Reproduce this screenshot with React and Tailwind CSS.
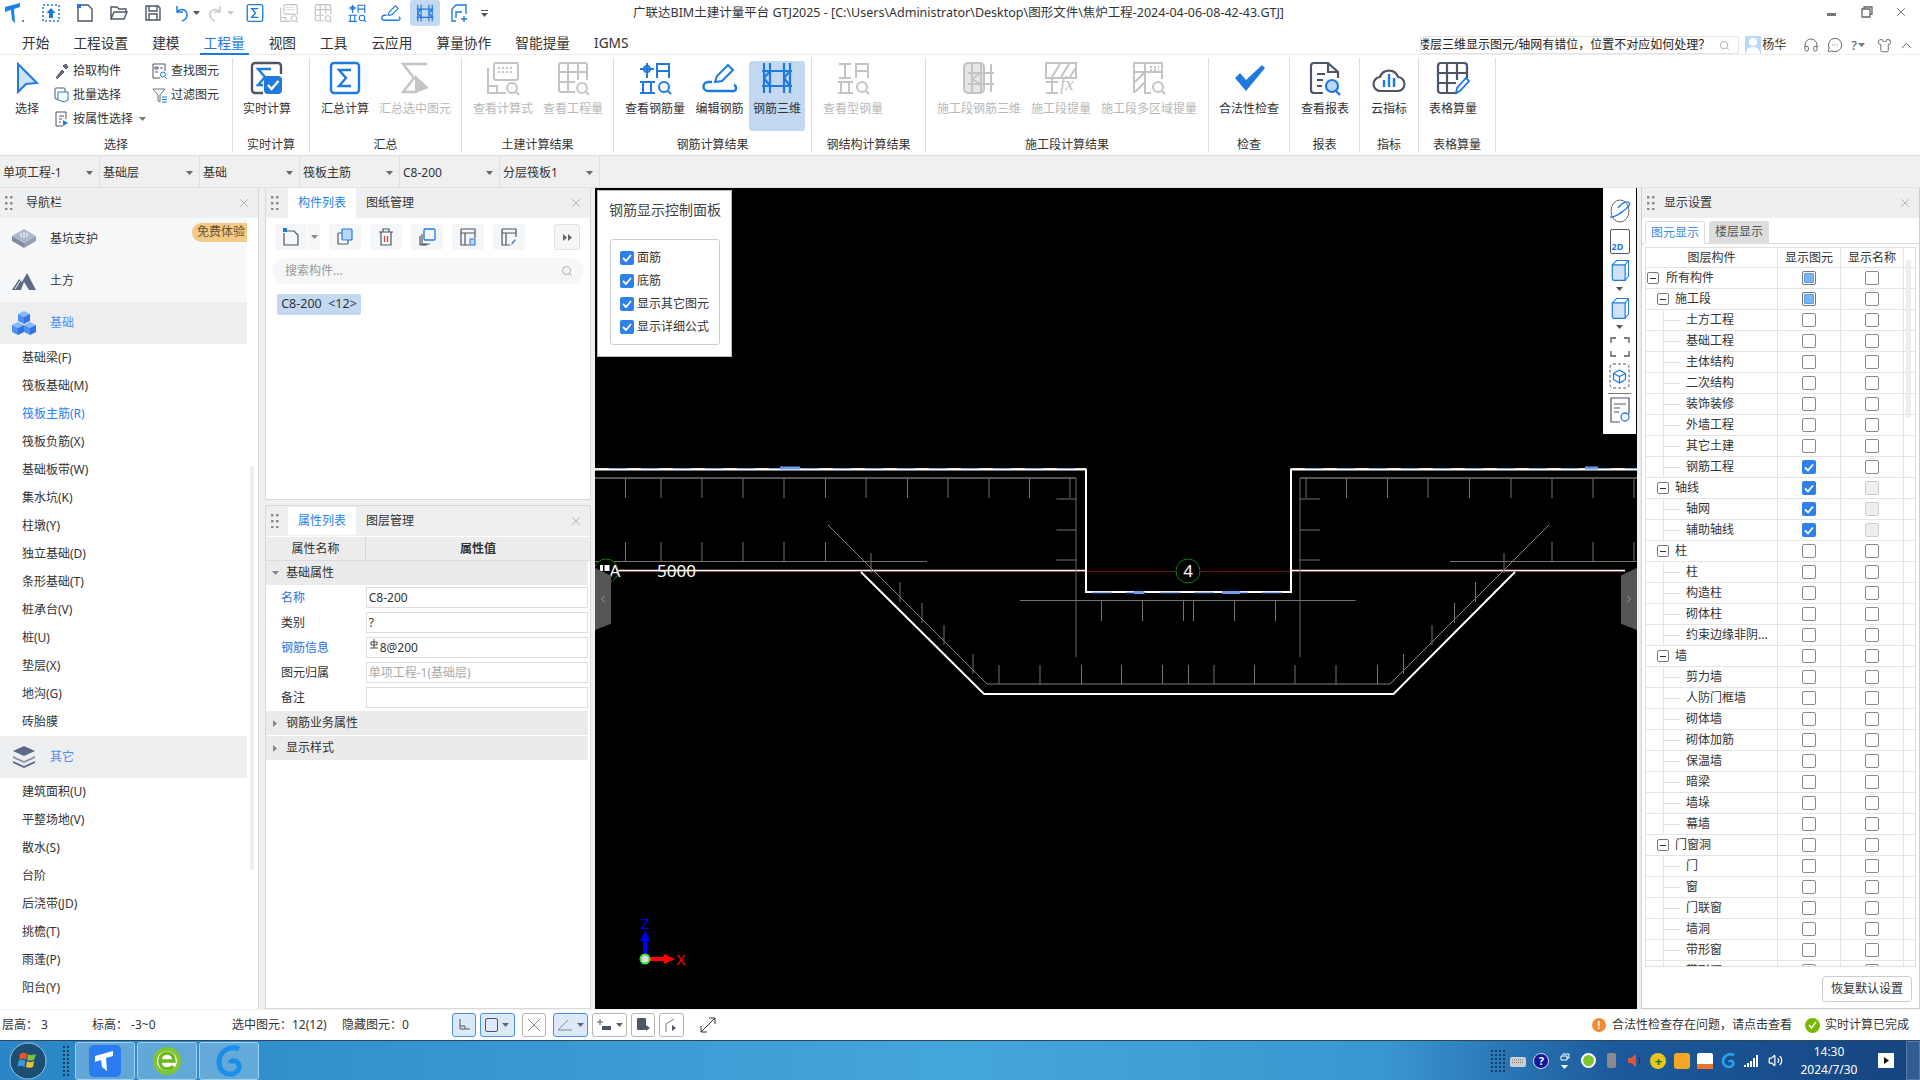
import { X, Search, ChevronUp, Headphones, MessageCircleMore, Shirt, ChevronLeft, ChevronRight, Volume2 } from "lucide-react"

const BLUE = "#1f7ae0"
const DARK = "#4d5666"
const GRAY = "#c4c4c4"

function Ic({ s = 36, children, className }) {
  return (
    <svg width={s} height={s} viewBox="0 0 36 36" fill="none" strokeWidth="2" className={className}>
      {children}
    </svg>
  )
}

// ribbon + quick access icons
const SigmaMark = ({ c }) => <path d="M24 10H12l7 8-7 8h12" stroke={c} strokeWidth="2.4" fill="none" />
const SumIcon = ({ s, c = BLUE }) => (
  <Ic s={s}>
    <rect x="4" y="3" width="28" height="30" rx="3" stroke={c} strokeWidth="2.4" />
    <SigmaMark c={c} />
  </Ic>
)
const RealtimeIcon = () => (
  <Ic>
    <path d="M32 14V6a3 3 0 0 0-3-3H6a3 3 0 0 0-3 3v24a3 3 0 0 0 3 3h8" stroke={DARK} strokeWidth="2.4" />
    <path d="M22 9H9l7 8-7 8h5" stroke={BLUE} strokeWidth="2.4" />
    <rect x="15" y="16" width="18" height="18" rx="4" fill={BLUE} />
    <path d="m19 25 3.500 4 7-8" stroke="#fff" strokeWidth="2.400" />
  </Ic>
)
const SumSelIcon = () => (
  <Ic>
    <path d="M30 4H6l11 14L6 32h14" stroke={GRAY} strokeWidth="2.4" />
    <path d="M18 15v18l14-5z" fill={GRAY} />
  </Ic>
)
const FormulaIcon = ({ s, c = GRAY, m = GRAY }) => (
  <Ic s={s}>
    <rect x="9" y="3" width="24" height="17" rx="2" stroke={c} />
    <path d="M13 8h16M13 12h16" stroke={c} strokeDasharray="2 2" />
    <path d="M3 8v25h18M3 26h9v7" stroke={c} />
    <circle cx="27" cy="28" r="5" stroke={m} />
    <path d="m31 32 3 3" stroke={m} />
  </Ic>
)
const QtyIcon = ({ s, c = GRAY, m = GRAY }) => (
  <Ic s={s}>
    <path d="M20 32H6a2 2 0 0 1-2-2V5a2 2 0 0 1 2-2h24a2 2 0 0 1 2 2v15M4 12h28M4 22h16M13 3v29M23 3v17" stroke={c} />
    <circle cx="27" cy="28" r="5" stroke={m} />
    <path d="m31 32 3 3" stroke={m} />
  </Ic>
)
const RebarQtyIcon = ({ s, c = BLUE }) => (
  <Ic s={s}>
    <circle cx="10" cy="9" r="3" stroke={c} />
    <path d="M10 3v15M3 9h14M20 18V4h12v14M20 11h12M3 22h15M3 33h15M6 22v11M14 22v11" stroke={c} />
    <circle cx="27" cy="27" r="5" stroke={c} />
    <path d="m31 31 3 3" stroke={c} />
  </Ic>
)
const EditRebarIcon = ({ s }) => (
  <Ic s={s}>
    <path d="m13 22 2-6L26 5l5 5-11 11z" stroke={BLUE} />
    <path d="M10 22H6a4 4 0 0 0 0 9h24a3 3 0 0 0 2-6" stroke={BLUE} strokeWidth="2.4" />
  </Ic>
)
const Rebar3DIcon = ({ s }) => (
  <Ic s={s}>
    <path d="M5 3v30M11 3v30M25 3v30M31 3v30M3 11h30M3 26h30M11 11l-6 7 6 8M31 11l-6 7 6 8" stroke={BLUE} strokeWidth="2.2" />
  </Ic>
)
const SteelIcon = () => (
  <Ic>
    <path d="M4 4h12M4 18h12M10 4v14M21 18V4h12v14M21 11h12M3 22h15M3 33h15M6 22v11M14 22v11" stroke={GRAY} />
    <circle cx="27" cy="27" r="5" stroke={GRAY} />
    <path d="m31 31 3 3" stroke={GRAY} />
  </Ic>
)
const ConstRebarIcon = () => (
  <Ic>
    <rect x="3" y="3" width="20" height="30" rx="4" fill="#e6e6e6" stroke={GRAY} />
    <path d="M11 4v28M20 4v28M30 4v28M7 13h26M7 24h26M20 13l-9 6 9 5" stroke={GRAY} />
  </Ic>
)
const ConstQtyIcon = () => (
  <div className="relative w-[36px] h-[36px]">
    <Ic>
      <path d="M3 3h30v15H3zM9 17l8-13M18 17l8-13M27 17l5-8M3 22h12M3 33h12M9 18v15" stroke={GRAY} />
    </Ic>
    <span className="absolute left-[17px] top-[14px] font-['Liberation_Serif',serif] italic text-[19px] leading-[20px] text-[#c4c4c4]">fx</span>
  </div>
)
const ConstMultiIcon = () => (
  <Ic>
    <path d="M3 33V3h28v16M3 12h28" stroke={GRAY} />
    <path d="m4 22 10-10M4 32l10-10M14 3v30h6" stroke={GRAY} />
    <path d="M19 7h9M19 10h9" stroke={GRAY} strokeDasharray="2 2" />
    <circle cx="27" cy="27" r="5" stroke={GRAY} />
    <path d="m31 31 3 3" stroke={GRAY} />
  </Ic>
)
const CheckBig = () => (
  <Ic>
    <path d="m4 18 5-5 6 7L31 5l3 3-19 23z" fill={BLUE} />
  </Ic>
)
const ReportIcon = () => (
  <Ic>
    <path d="M16 33H7a3 3 0 0 1-3-3V6a3 3 0 0 1 3-3h14l10 9v6" stroke={DARK} strokeWidth="2.2" />
    <path d="M21 3v9h10M10 14h8M10 20h6M10 26h5" stroke={DARK} strokeWidth="2.2" />
    <circle cx="25" cy="26" r="6" fill="#bcd7f7" stroke={BLUE} strokeWidth="2.2" />
    <path d="m29 31 4 4" stroke={BLUE} strokeWidth="2.4" />
  </Ic>
)
const CloudIcon = () => (
  <Ic>
    <path d="M10 31a7 7 0 0 1-1-14 9.500 9.500 0 0 1 18 0 7 7 0 0 1-1 14z" stroke={DARK} strokeWidth="2.2" />
    <path d="M13 20v7M18 14v13M23 18v9" stroke={BLUE} strokeWidth="2.4" />
  </Ic>
)
const TableIcon = () => (
  <Ic>
    <path d="M22 33H6a3 3 0 0 1-3-3V6a3 3 0 0 1 3-3h23a3 3 0 0 1 3 3v12M3 13h29M3 23h18M12 3v30M22 3v17" stroke={DARK} strokeWidth="2.2" />
    <path d="m21 33 1-5 9-10 3 3-9 10z" stroke={BLUE} strokeWidth="1.800" />
  </Ic>
)

const Logo = () => (
  <svg width="22" height="22" viewBox="0 0 22 22" fill="none">
    <path d="M1 5 16 1v4l-6 2 1 14-3-3-1-10-6 2z" fill="#1b82e8" />
    <circle cx="19" cy="19" r="1" fill="#555" />
  </svg>
)

function Caret({ c = "#666" }) {
  return (
    <svg width="7" height="4" viewBox="0 0 7 4" className="shrink-0">
      <path d="M0 0h7L3.500 4z" fill={c} />
    </svg>
  )
}

function QuickIcon({ children, active }) {
  return (
    <div className="w-[34px] h-[30px] flex items-center justify-center relative shrink-0">
      <div className={`w-[30px] h-[26px] flex items-center justify-center rounded-[3px] ${active ? "bg-[#c2d9f1]" : ""}`}>{children}</div>
    </div>
  )
}

function TitleBar() {
  return (
    <div className="h-[33px] shrink-0 flex items-center bg-white pb-[7px]">
      <div className="w-[633px] shrink-0 flex items-center">
        <div className="w-[30px] flex justify-center"><Logo /></div>
        <div className="w-[4px]" />
        <QuickIcon>
          <svg width="20" height="20" viewBox="0 0 20 20" fill="none">
            <rect x="2" y="2" width="16" height="16" stroke={BLUE} strokeWidth="1.500" strokeDasharray="2 2" />
            <path d="M10 5 5.500 10H8v5h4v-5h2.500z" fill={BLUE} />
          </svg>
        </QuickIcon>
        <QuickIcon>
          <svg width="20" height="20" viewBox="0 0 20 20" fill="none">
            <path d="M5 2h8l4 4v12H3V5" stroke={DARK} strokeWidth="1.400" />
            <rect x="2" y="1" width="4" height="4" fill={BLUE} />
          </svg>
        </QuickIcon>
        <QuickIcon>
          <svg width="20" height="20" viewBox="0 0 20 20" fill="none">
            <path d="M2 16V4h6l2 2h7v3M2 16l3-7h13l-3 7z" stroke={DARK} strokeWidth="1.400" />
          </svg>
        </QuickIcon>
        <QuickIcon>
          <svg width="20" height="20" viewBox="0 0 20 20" fill="none">
            <path d="M3 3h12l2 2v12H3zM6 3v5h8V3M6 17v-6h8v6" stroke={DARK} strokeWidth="1.400" />
          </svg>
        </QuickIcon>
        <QuickIcon>
          <div className="flex items-center gap-[4px]">
            <svg width="15" height="17" viewBox="0 0 15 17" fill="none"><path d="M3 1v6h6M3 7c3-4 10-3 10 3 0 3-2 5-5 6" stroke={BLUE} strokeWidth="1.500" /></svg>
            <Caret c="#555" />
          </div>
        </QuickIcon>
        <QuickIcon>
          <div className="flex items-center gap-[4px]">
            <svg width="15" height="17" viewBox="0 0 15 17" fill="none"><path d="M12 1v6H6M12 7C9 3 2 4 2 10c0 3 2 5 5 6" stroke="#c8c8c8" strokeWidth="1.500" /></svg>
            <Caret c="#c8c8c8" />
          </div>
        </QuickIcon>
        <QuickIcon><SumIcon s={20} /></QuickIcon>
        <QuickIcon><FormulaIcon s={20} /></QuickIcon>
        <QuickIcon><QtyIcon s={20} /></QuickIcon>
        <QuickIcon><RebarQtyIcon s={20} /></QuickIcon>
        <QuickIcon><EditRebarIcon s={20} /></QuickIcon>
        <QuickIcon active><Rebar3DIcon s={20} /></QuickIcon>
        <QuickIcon>
          <svg width="20" height="20" viewBox="0 0 20 20" fill="none">
            <path d="M7 18H3V6l4-4h10v9M13 9H7v6" stroke={BLUE} strokeWidth="1.400" />
            <path d="M15 13v6M12 16h6" stroke={BLUE} strokeWidth="1.400" />
          </svg>
        </QuickIcon>
        <div className="w-[16px] flex flex-col items-center gap-[2px]">
          <div className="w-[7px] h-px bg-[#555]" />
          <Caret c="#555" />
        </div>
      </div>
      <div className="text-[12.5px] leading-[18px] text-[#333] whitespace-nowrap">
        广联达BIM土建计量平台 GTJ2025 - [C:\Users\Administrator\Desktop\图形文件\焦炉工程-2024-04-06-08-42-43.GTJ]
      </div>
      <div className="ml-auto flex items-center pr-[12px] text-[#666]">
        <div className="w-[9px] h-[3px] bg-[#777] mt-[2px]" />
        <svg width="12" height="12" viewBox="0 0 12 12" fill="none" className="ml-[25px] mb-[3px]">
          <path d="M3 3V1h8v7H9M1 3h8v8H1z" stroke="#666" strokeWidth="1.300" />
        </svg>
        <X size={14} strokeWidth={1.500} className="ml-[21px] mb-[3px]" />
      </div>
    </div>
  )
}

const tabs = ["开始", "工程设置", "建模", "工程量", "视图", "工具", "云应用", "算量协作", "智能提量", "IGMS"]

function MenuBar() {
  return (
    <div className="h-[22px] shrink-0 flex items-stretch bg-white border-b border-[#eee] relative pl-[10px]">
      {tabs.map((t) => (
        <div
          key={t}
          className={`mx-[8px] px-[4px] text-[13.7px] leading-[20px] h-[22px] ${t === "工程量" ? "text-[#1f7ae0] border-b-2 border-[#1f7ae0]" : "text-[#333]"}`}
        >
          {t}
        </div>
      ))}
      <div className="ml-auto flex items-center mt-[3px]">
        <div className="w-[319px] h-[18px] border border-[#e4e4e4] rounded-[2px] flex items-center overflow-hidden">
          <div className="flex-1 min-w-0 flex justify-end overflow-hidden">
            <span className="shrink-0 whitespace-nowrap text-[12px] leading-[16px] text-[#222]">楼层三维显示图元/轴网有错位，位置不对应如何处理？</span>
          </div>
          <div className="w-[28px] shrink-0 flex justify-center">
            <Search size={11} className="text-[#aaa]" />
          </div>
        </div>
        <div className="w-[16px] h-[18px] ml-[6px] bg-[#bcd9f7] flex justify-center items-end overflow-hidden">
          <svg width="16" height="18" viewBox="0 0 16 18"><circle cx="8" cy="6" r="4" fill="#fff" /><path d="M1 18c0-5 3-7 7-7s7 2 7 7z" fill="#fff" /></svg>
        </div>
        <span className="text-[12px] text-[#333] leading-[16px] ml-[1px] w-[26px]">杨华</span>
        <div className="w-[15px]" />
        <Headphones size={16} strokeWidth={1.300} className="text-[#555]" />
        <MessageCircleMore size={16} strokeWidth={1.300} className="text-[#555] ml-[8px]" />
        <span className="text-[13px] text-[#555] leading-[16px] ml-[8px]">?</span>
        <div className="ml-[1px]"><Caret c="#777" /></div>
        <Shirt size={15} strokeWidth={1.300} className="text-[#555] ml-[12px]" />
        <ChevronUp size={17} strokeWidth={1.300} className="text-[#555] ml-[6px] mr-[5px]" />
      </div>
    </div>
  )
}

function BigBtn({ icon, label, w, off, active }) {
  return (
    <div style={{ width: w }} className={`h-[70px] shrink-0 flex flex-col items-center rounded-[3px] ${active ? "bg-[#c2d9f1]" : ""}`}>
      <div className="h-[36px] -mt-px flex items-center justify-center">{icon}</div>
      <div className={`mt-[5px] h-[16px] text-[12px] leading-[16px] whitespace-nowrap ${off ? "text-[#b8b8b8]" : "text-[#333]"}`}>{label}</div>
    </div>
  )
}

function Group({ w, pl = 0, label, children }) {
  return (
    <div style={{ width: w }} className="shrink-0 h-[94px] mt-[3px] pt-[3px] flex flex-col border-r border-[#dedede]">
      <div style={{ paddingLeft: pl }} className="h-[70px] flex">{children}</div>
      <div className="mt-[6px] h-[16px] text-[12px] leading-[16px] text-center text-[#333]">{label}</div>
    </div>
  )
}

function SmallCmd({ icon, label, caret }) {
  return (
    <div className="h-[24px] flex items-center gap-[4px] text-[12px] text-[#333] whitespace-nowrap">
      <div className="w-[15px] flex justify-center">{icon}</div>
      <span className="leading-[16px]">{label}</span>
      {caret && <div className="ml-[2px]"><Caret c="#777" /></div>}
    </div>
  )
}

function Ribbon() {
  return (
    <div className="h-[101px] shrink-0 flex items-start bg-white border-b border-[#dcdcdc]">
      <Group w={233} label="选择">
        <div className="w-[54px] flex flex-col items-center shrink-0">
          <div className="h-[36px] -mt-px flex items-center">
            <svg width="24" height="32" viewBox="0 0 24 32" fill="none"><path d="M3 2 22 21l-11 1-8 8z" fill="#cfe2f9" stroke={BLUE} strokeWidth="2" /></svg>
          </div>
          <div className="mt-[5px] text-[12px] leading-[16px] text-[#333]">选择</div>
        </div>
        <div className="w-[98px] shrink-0 -mt-[2px]">
          <SmallCmd label="拾取构件" icon={
            <svg width="14" height="16" viewBox="0 0 14 16" fill="none"><path d="M1 15 7 7l2 2-6 6zM8 3l3 3 2-2-2-3z" fill="#6b7280" stroke="#4d5666" /></svg>
          } />
          <SmallCmd label="批量选择" icon={
            <svg width="15" height="16" viewBox="0 0 15 16" fill="none"><rect x="1" y="1" width="10" height="11" rx="1" stroke="#4d5666" /><path d="M4 5h10v8l-4 2-6-2z" fill="#fff" stroke={BLUE} /></svg>
          } />
          <SmallCmd caret label="按属性选择" icon={
            <svg width="15" height="16" viewBox="0 0 15 16" fill="none"><path d="M9 15H2V1h10v7M5 5h5M5 8h3M5 11h2" stroke="#4d5666" /><path d="m9 9 5 3-5 3z" fill={BLUE} /></svg>
          } />
        </div>
        <div className="shrink-0 -mt-[2px]">
          <SmallCmd label="查找图元" icon={
            <svg width="15" height="16" viewBox="0 0 15 16" fill="none"><path d="M8 15H1V1h12v7M3 4h3v2H3zM8 5h3M3 9h3" stroke="#4d5666" /><circle cx="11" cy="11.500" r="2.500" stroke={BLUE} /><path d="m13 14 2 2" stroke={BLUE} /></svg>
          } />
          <SmallCmd label="过滤图元" icon={
            <svg width="15" height="16" viewBox="0 0 15 16" fill="none"><path d="M1 2h12L8 8v7L6 14V8z" stroke="#6b7280" /><path d="M10 10h5M10 12.500h5M10 15h5" stroke={BLUE} /></svg>
          } />
        </div>
      </Group>
      <Group w={77} pl={2} label="实时计算">
        <BigBtn w={64} icon={<RealtimeIcon />} label="实时计算" />
      </Group>
      <Group w={152} label="汇总">
        <BigBtn w={70} icon={<SumIcon />} label="汇总计算" />
        <BigBtn w={70} off icon={<SumSelIcon />} label="汇总选中图元" />
      </Group>
      <Group w={152} pl={6} label="土建计算结果">
        <BigBtn w={70} off icon={<FormulaIcon />} label="查看计算式" />
        <BigBtn w={70} off icon={<QtyIcon />} label="查看工程量" />
      </Group>
      <Group w={198} pl={6} label="钢筋计算结果">
        <BigBtn w={70} icon={<RebarQtyIcon />} label="查看钢筋量" />
        <BigBtn w={59} icon={<EditRebarIcon />} label="编辑钢筋" />
        <BigBtn w={56} active icon={<Rebar3DIcon />} label="钢筋三维" />
      </Group>
      <Group w={114} pl={6} label="钢结构计算结果">
        <BigBtn w={70} off icon={<SteelIcon />} label="查看型钢量" />
      </Group>
      <Group w={283} pl={8} label="施工段计算结果">
        <BigBtn w={90} off icon={<ConstRebarIcon />} label="施工段钢筋三维" />
        <BigBtn w={74} off icon={<ConstQtyIcon />} label="施工段提量" />
        <BigBtn w={102} off icon={<ConstMultiIcon />} label="施工段多区域提量" />
      </Group>
      <Group w={81} pl={5} label="检查">
        <BigBtn w={70} icon={<CheckBig />} label="合法性检查" />
      </Group>
      <Group w={70} pl={5} label="报表">
        <BigBtn w={60} icon={<ReportIcon />} label="查看报表" />
      </Group>
      <Group w={59} pl={4} label="指标">
        <BigBtn w={50} icon={<CloudIcon />} label="云指标" />
      </Group>
      <Group w={77} pl={4} label="表格算量">
        <BigBtn w={60} icon={<TableIcon />} label="表格算量" />
      </Group>
    </div>
  )
}

const combos = ["单项工程-1", "基础层", "基础", "筏板主筋", "C8-200", "分层筏板1"]

function ComboBar() {
  return (
    <div className="h-[32px] shrink-0 flex bg-[#f0f0f0] border-b border-[#e2e2e2]">
      {combos.map((c) => (
        <div key={c} className="w-[100px] flex items-center justify-between pl-[3px] pr-[6px] pt-[2px] border-r border-[#e0e0e0] text-[12px] text-[#333]">
          <span className="leading-[16px]">{c}</span>
          <Caret />
        </div>
      ))}
    </div>
  )
}

function Grip() {
  return (
    <svg width="8" height="14" viewBox="0 0 8 14" className="shrink-0">
      {[1, 7, 13].map((y) => (
        <g key={y} fill="#8a8a8a">
          <rect x="0" y={y - 1} width="2.500" height="2.500" />
          <rect x="5" y={y - 1} width="2.500" height="2.500" />
        </g>
      ))}
    </svg>
  )
}

function PanelHead({ children }) {
  return (
    <div className="h-[30px] shrink-0 flex items-center bg-[#eeeff1] pl-[5px] pr-[7px]">
      <Grip />
      {children}
      <X size={14} strokeWidth={1.200} className="ml-auto text-[#999]" />
    </div>
  )
}

const IsoBox = ({ c1, c2, c3, x = 0, y = 0, s = 1 }) => (
  <g transform={`translate(${x} ${y}) scale(${s})`}>
    <path d="M0 3 6 0l6 3-6 3z" fill={c1} />
    <path d="M0 3v7l6 3V6z" fill={c2} />
    <path d="M12 3v7l-6 3V6z" fill={c3} />
  </g>
)

function NavGroup({ icon, label, active, badge }) {
  return (
    <div className={`h-[42px] w-[247px] flex items-center pl-[11px] relative ${active ? "bg-[#edeef0]" : "bg-[#f7f8fa]"}`}>
      <div className="w-[26px] h-[26px] flex items-center justify-center">{icon}</div>
      <span className={`ml-[13px] text-[12px] leading-[16px] ${active ? "text-[#4c8fe8]" : "text-[#333]"}`}>{label}</span>
      {badge && (
        <div className="absolute right-0 top-[5px] w-[55px] h-[19px] rounded-l-[10px] bg-[#f3c986] text-[12px] leading-[18px] text-[#6b5330] text-right pr-[2px]">免费体验</div>
      )}
    </div>
  )
}

function NavItem({ label, on }) {
  return <div className={`h-[28px] pl-[22px] flex items-center text-[12px] ${on ? "text-[#1f83ee]" : "text-[#333]"}`}>{label}</div>
}

const foundation = ["基础梁(F)", "筏板基础(M)", "筏板主筋(R)", "筏板负筋(X)", "基础板带(W)", "集水坑(K)", "柱墩(Y)", "独立基础(D)", "条形基础(T)", "桩承台(V)", "桩(U)", "垫层(X)", "地沟(G)", "砖胎膜"]
const others = ["建筑面积(U)", "平整场地(V)", "散水(S)", "台阶", "后浇带(JD)", "挑檐(T)", "雨蓬(P)", "阳台(Y)"]

function Nav() {
  return (
    <div className="w-[259px] shrink-0 flex flex-col bg-white border-r border-[#d8d8d8] h-[821px]">
      <PanelHead>
        <span className="ml-[13px] text-[12px] leading-[16px] text-[#333]">导航栏</span>
      </PanelHead>
      <div className="flex-1 min-h-0 overflow-hidden relative">
        <NavGroup
          badge
          label="基坑支护"
          icon={
            <svg width="26" height="24" viewBox="0 0 26 24"><path d="M1 9 13 2l12 7-12 7z" fill="#aeb8cc" /><path d="M1 9v5l12 7V16z" fill="#7f8aa3" /><path d="M25 9v5l-12 7V16z" fill="#939eb6" /><path d="M10 10V6M13 11V5M16 10V6" stroke="#fff" /></svg>
          }
        />
        <NavGroup
          label="土方"
          icon={
            <svg width="26" height="22" viewBox="0 0 26 22"><path d="M1 20 8 9l3 3 5-9 9 17h-7l-5-8-3 8z" fill="#5c6a86" /><path d="M4 19 9 11" stroke="#f7f8fa" /></svg>
          }
        />
        <NavGroup
          active
          label="基础"
          icon={
            <svg width="24" height="24" viewBox="0 0 24 24"><IsoBox c1="#85b8ff" c2="#4f8ff0" c3="#3273df" x={6} y={0} /><IsoBox c1="#85b8ff" c2="#4f8ff0" c3="#3273df" x={0} y={11} /><IsoBox c1="#85b8ff" c2="#4f8ff0" c3="#3273df" x={12} y={11} /></svg>
          }
        />
        {foundation.map((n) => <NavItem key={n} label={n} on={n === "筏板主筋(R)"} />)}
        <NavGroup
          active
          label="其它"
          icon={
            <svg width="24" height="22" viewBox="0 0 24 22"><path d="m1 5 11-5 11 5-11 5z" fill="#5c6a86" /><path d="m1 10 11 5 11-5v2l-11 5-11-5z" fill="#8a94a9" /><path d="m1 15 11 5 11-5v2l-11 5-11-5z" fill="#5c6a86" /></svg>
          }
        />
        {others.map((n) => <NavItem key={n} label={n} />)}
        <div className="absolute left-[250px] top-[248px] w-[4px] h-[404px] rounded-full bg-[#eee]" />
      </div>
    </div>
  )
}

function ToolBtn({ children }) {
  return <div className="w-[32px] h-[26px] rounded-[3px] bg-[#f5f6f7] flex items-center justify-center">{children}</div>
}

function ListPanel() {
  const stroke = "#4d5666"
  return (
    <div className="h-[312px] shrink-0 flex flex-col bg-white border border-[#d8d8d8] border-t-0">
      <PanelHead>
        <div className="ml-[9px] w-[68px] h-[30px] bg-white text-[12px] leading-[30px] text-center text-[#1f83ee]">构件列表</div>
        <span className="ml-[10px] text-[12px] leading-[16px] text-[#333]">图纸管理</span>
      </PanelHead>
      <div className="flex items-center h-[26px] mt-[6px] pl-[9px] pr-[10px]">
        <ToolBtn>
          <svg width="16" height="18" viewBox="0 0 16 18" fill="none"><path d="M4 3h7l4 4v10H1V5" stroke={stroke} strokeWidth="1.200" /><rect x="0" y="0" width="4" height="4" fill={BLUE} /></svg>
        </ToolBtn>
        <div className="w-[12px] ml-px h-[26px] bg-[#f5f6f7] flex items-center justify-center"><Caret c="#888" /></div>
        <div className="ml-[9px]"><ToolBtn>
          <svg width="16" height="18" viewBox="0 0 16 18" fill="none"><rect x="1" y="5" width="10" height="11" rx="1" fill="#fff" stroke={stroke} strokeWidth="1.200" /><rect x="5" y="1" width="10" height="11" rx="1" fill="#bcd7f7" stroke={BLUE} strokeWidth="1.200" /></svg>
        </ToolBtn></div>
        <div className="ml-[9px]"><ToolBtn>
          <svg width="16" height="18" viewBox="0 0 16 18" fill="none"><path d="M1 4h14M5 4V1h6v3M3 4v13h10V4" stroke={stroke} strokeWidth="1.200" /><path d="M6.500 8v6M9.500 8v6" stroke="#d43b3b" strokeWidth="1.200" /></svg>
        </ToolBtn></div>
        <div className="ml-[9px]"><ToolBtn>
          <svg width="17" height="18" viewBox="0 0 17 18" fill="none"><path d="M3 6v10h8M1 8v9h7" stroke={stroke} strokeWidth="1.200" /><rect x="5" y="1" width="11" height="11" rx="1" stroke={BLUE} strokeWidth="1.300" /></svg>
        </ToolBtn></div>
        <div className="ml-[9px]"><ToolBtn>
          <svg width="16" height="18" viewBox="0 0 16 18" fill="none"><path d="M1 1h14v9M1 1v16h8M1 5h14M5 5v12" stroke={stroke} strokeWidth="1.200" /><rect x="10" y="11" width="5" height="6" fill="#bcd7f7" stroke={BLUE} /></svg>
        </ToolBtn></div>
        <div className="ml-[9px]"><ToolBtn>
          <svg width="16" height="18" viewBox="0 0 16 18" fill="none"><path d="M1 1h14v8M1 1v16h8M1 5h14M5 5v12" stroke={stroke} strokeWidth="1.200" /><path d="m10 17 1-3 3-3 1 1-3 4z" fill="#6e8fb8" /></svg>
        </ToolBtn></div>
        <div className="ml-auto w-[26px] h-[26px] rounded-[3px] border border-[#e2e2e2] bg-[#f5f6f7] flex items-center justify-center">
          <svg width="9" height="7" viewBox="0 0 9 7"><path d="M0 0l4 3.500L0 7zM5 0l4 3.500L5 7z" fill="#666" /></svg>
        </div>
      </div>
      <div className="mx-[7px] mt-[8px] h-[26px] rounded-full bg-[#f5f6f7] flex items-center pl-[12px] pr-[10px] text-[12px] text-[#999]">
        <span>搜索构件...</span>
        <Search size={12} className="ml-auto text-[#aaa]" />
      </div>
      <div className="ml-[11px] mt-[10px] w-[84px] h-[21px] bg-[#c2d9f1] rounded-[2px] flex items-center justify-center text-[12.5px] text-[#333] whitespace-pre">C8-200  {"<12>"}</div>
    </div>
  )
}

function PropGroup({ label, open }) {
  return (
    <div className="h-[24px] mb-[1px] mr-[2px] bg-[#ebebeb] flex items-center text-[12px] text-[#333]">
      <div className="w-[18px] flex justify-center">
        {open ? <Caret c="#888" /> : <svg width="4" height="7" viewBox="0 0 4 7"><path d="M0 0v7l4-3.500z" fill="#888" /></svg>}
      </div>
      <span className="ml-[2px] leading-[16px]">{label}</span>
    </div>
  )
}

function PropRow({ label, value, link, muted }) {
  return (
    <div className="h-[25px] flex items-center text-[12px] pr-[2px]">
      <div className={`w-[100px] pl-[15px] ${link ? "text-[#2a6fe0]" : "text-[#333]"}`}>{label}</div>
      <div className={`w-[223px] h-[21px] border border-[#ddd] pl-[2px] leading-[19px] ${muted ? "text-[#aaa]" : "text-[#333]"}`}>{value}</div>
    </div>
  )
}

// rebar grade symbol shown before the spacing value
const GradeMark = () => (
  <svg width="10" height="10" viewBox="0 0 10 10" fill="none" className="inline-block align-[3px] mr-px">
    <path d="M1 9h8M5 0v9M2 6V3h6v3z" stroke="#333" strokeWidth="0.900" />
  </svg>
)

function PropPanel() {
  return (
    <div className="h-[504px] mt-[5px] shrink-0 flex flex-col bg-white border border-[#d8d8d8]">
      <PanelHead>
        <div className="ml-[9px] w-[68px] h-[28px] bg-white text-[12px] leading-[28px] text-center text-[#1f83ee]">属性列表</div>
        <span className="ml-[10px] text-[12px] leading-[16px] text-[#333]">图层管理</span>
      </PanelHead>
      <div className="h-[24px] mt-[1px] flex bg-[#ececec] border-b border-[#dcdcdc] text-[12px] text-[#333]">
        <div className="w-[100px] flex items-center justify-center border-r border-[#d6d6d6]">属性名称</div>
        <div className="flex-1 flex items-center justify-center font-semibold">属性值</div>
      </div>
      <PropGroup open label="基础属性" />
      <div className="-mt-px" />
      <PropRow link label="名称" value="C8-200" />
      <PropRow label="类别" value="?" />
      <PropRow link label="钢筋信息" value={<span><GradeMark />8@200</span>} />
      <PropRow muted label="图元归属" value="单项工程-1(基础层)" />
      <PropRow label="备注" value="" />
      <div className="h-[1px]" />
      <PropGroup label="钢筋业务属性" />
      <PropGroup label="显示样式" />
    </div>
  )
}

function CheckRow({ label }) {
  return (
    <div className="h-[23px] flex items-center">
      <div className="w-[14px] h-[14px] rounded-[2px] bg-[#2f80e8] flex items-center justify-center">
        <svg width="10" height="8" viewBox="0 0 10 8" fill="none"><path d="m1 4 3 3 5-6" stroke="#fff" strokeWidth="1.800" /></svg>
      </div>
      <span className="ml-[3px] text-[12px] leading-[16px] text-[#333]">{label}</span>
    </div>
  )
}

const Seg = ({ d, c = "#7c706a", w = 1 }) => <path d={d} stroke={c} strokeWidth={w} fill="none" />

function CadDrawing() {
  const topTicks = [625.5, 661, 702, 743, 784, 825.5, 866, 907.5, 948, 989, 1029.5, 1070, 1306, 1346.5, 1387.5, 1428, 1469.5, 1511, 1552, 1593, 1634]
  const lowTicks = [625.5, 661, 702, 743, 784, 825.5, 1552, 1593, 1634]
  const botTicks = [999, 1040, 1081.5, 1121.5, 1162.5, 1188.5, 1214, 1254.5, 1295, 1336, 1377.5]
  const midTicks = [1101.5, 1142.5, 1183.5, 1193.5, 1234.5, 1275.5]
  const slopeTicks = [[871, 553, 573], [900, 582, 602], [922, 603, 623], [944, 625, 645], [973, 654, 674], [1504, 553, 573], [1475.5, 582, 602], [1454.5, 603, 623], [1432, 625, 645], [1403.5, 654, 674]]
  const rowY = [499, 530, 560]
  return (
    <svg width="1042" height="821" viewBox="595 188 1042 821" className="absolute inset-0">
      {/* axis line */}
      <Seg d="M595 571.500H1625" c="#6e1212" />
      {/* outer concrete */}
      <Seg d="M595 469.500H1086V592H1291V469.500H1637" c="#fff" w={2} />
      <Seg d="M595 570.500H1086M1291 570.500H1625" c="#fff" w={1.500} />
      <Seg d="M861 572 984 694H1393.500L1515 572" c="#fff" w={2} />
      {/* dashes along the top and pit edge */}
      <Seg d="M595 468.500H1086M1291 468.500H1637" c="#7fa8e8" w={1} />
      <path d="M595 468.500H1086M1291 468.500H1637" stroke="#ebe6d0" strokeWidth="1" strokeDasharray="14 18" />
      <Seg d="M780 468H800M1585 468H1598" c="#6f9cf0" w={3} />
      <path d="M1092 592.500H1291" stroke="#8ab4f5" strokeWidth="1.500" strokeDasharray="20 14" />
      <Seg d="M1134 592.500H1144M1222 592.500H1240" c="#6f9cf0" w={3} />
      {/* rebar */}
      <Seg d="M595 478H1076M1300 478H1637" c="#5b534e" w={2} />
      <Seg d="M1076 478V657M1300 478V657" c="#6d6560" />
      <Seg d="M595 561.500H927M1450 561.500H1637M1020 600.500H1355.500" />
      <Seg d="M828 525 987 684H1390L1549 525" c="#8a7e76" />
      {topTicks.map((x) => <Seg key={x} d={`M${x} 478V498`} />)}
      {lowTicks.map((x) => <Seg key={x} d={`M${x} 542V561`} />)}
      {botTicks.map((x) => <Seg key={x} d={`M${x} 665V684`} />)}
      {midTicks.map((x) => <Seg key={x} d={`M${x} 600V621`} />)}
      {slopeTicks.map(([x, a, b]) => <Seg key={x} d={`M${x} ${a}V${b}`} />)}
      {rowY.map((y) => <Seg key={y} d={`M1056.500 ${y}H1076M1300 ${y}H1320`} />)}
      {/* grid bubbles */}
      <circle cx="1188" cy="571" r="12" fill="#000" stroke="#0c7d0c" />
      <circle cx="606" cy="571" r="12" fill="#000" stroke="#0c7d0c" />
      <path d="M600 565h3v6h-3zM604.500 565h5v6h-5z" fill="#fff" />
      <text x="1188" y="577" textAnchor="middle" fill="#fff" fontSize="17" fontFamily="Noto Sans">4</text>
      <text x="615" y="577" textAnchor="middle" fill="#fff" fontSize="17" fontFamily="Noto Sans">A</text>
      <text x="657" y="577" fill="#fff" fontSize="17" fontFamily="Noto Sans">5000</text>
      {/* axes */}
      <Seg d="M645 958V938" c="#0000f0" w={4} />
      <path d="M645 930 640 941H650z" fill="#0000f0" />
      <Seg d="M645 959H665" c="#ff0000" w={4} />
      <path d="M675 959 664 954V964z" fill="#ff0000" />
      <circle cx="645" cy="959" r="4.500" fill="#ddd" stroke="#3ee03e" strokeWidth="2" />
      <text x="645" y="929" textAnchor="middle" fill="#0000f0" fontSize="15" fontFamily="Noto Sans">Z</text>
      <text x="681" y="965" textAnchor="middle" fill="#ff0000" fontSize="15" fontFamily="Noto Sans">X</text>
    </svg>
  )
}

function CollapseTab({ side }) {
  const left = side === "left"
  return (
    <div className={`absolute top-[380px] w-[16px] h-[62px] bg-[#555] flex items-center justify-center ${left ? "left-0 [clip-path:polygon(0_0,100%_12%,100%_90%,0_100%)]" : "right-0 [clip-path:polygon(0_12%,100%_0,100%_100%,0_90%)]"}`}>
      {left ? <ChevronLeft size={12} className="text-[#999]" /> : <ChevronRight size={12} className="text-[#999]" />}
    </div>
  )
}

function ViewBtn({ children, h = 28 }) {
  return <div style={{ height: h }} className="flex items-center justify-center">{children}</div>
}

const ViewCube = () => (
  <svg width="22" height="24" viewBox="0 0 22 28" fill="none">
    <path d="M2 8h15v18H4a2 2 0 0 1-2-2z" fill="#cfe2f9" stroke={BLUE} strokeWidth="1.400" />
    <path d="m2 8 5-5h14v18l-4 5M17 8l4-5" stroke={BLUE} strokeWidth="1.200" />
  </svg>
)

function CanvasTools() {
  return (
    <div className="absolute right-[1px] top-0 w-[33px] h-[246px] bg-white flex flex-col items-center pt-[9px]">
      <ViewBtn>
        <svg width="24" height="26" viewBox="0 0 24 26" fill="none"><ellipse cx="12" cy="13" rx="9" ry="11" stroke="#666" /><path d="M2 19C8 20 20 10 22 6c-3-5-9 0-12 4" stroke={BLUE} strokeWidth="1.300" /></svg>
      </ViewBtn>
      <ViewBtn h={32}>
        <div className="relative w-[20px] h-[25px] rounded-[2px] border border-[#4d5666] bg-white">
          <span className="absolute left-[1px] bottom-[1px] text-[9px] leading-[10px] font-bold text-[#1f7ae0]">2D</span>
        </div>
      </ViewBtn>
      <ViewBtn h={26}><ViewCube /></ViewBtn>
      <div className="h-[12px] flex items-center"><Caret c="#555" /></div>
      <ViewBtn h={26}><ViewCube /></ViewBtn>
      <div className="h-[12px] flex items-center"><Caret c="#555" /></div>
      <ViewBtn h={28}>
        <svg width="20" height="20" viewBox="0 0 20 20" fill="none"><path d="M1 6V1h5M14 1h5v5M19 14v5h-5M6 19H1v-5" stroke="#4d5666" strokeWidth="1.300" /></svg>
      </ViewBtn>
      <ViewBtn h={30}>
        <svg width="21" height="26" viewBox="0 0 21 26" fill="none"><rect x="1" y="1" width="19" height="24" rx="3" stroke="#4d5666" strokeDasharray="3 2" /><path d="m10.500 7 6 3.500v6L10.500 20l-6-3.500v-6zM4.500 10.500l6 3 6-3M10.500 13.500V20" stroke={BLUE} strokeWidth="1.200" /></svg>
      </ViewBtn>
      <div className="w-[23px] h-px bg-[#777] mt-[2px] mb-[3px]" />
      <svg width="22" height="26" viewBox="0 0 22 26" fill="none"><path d="M11 25H2V1h18v16M5 7h12M5 11h6M5 15h5" stroke="#4d5666" strokeWidth="1.200" /><circle cx="16" cy="20" r="4" stroke={BLUE} strokeWidth="1.300" /></svg>
    </div>
  )
}

function Canvas() {
  return (
    <div className="ml-[4px] w-[1042px] h-[821px] shrink-0 relative overflow-hidden bg-black">
      <CadDrawing />
      <div className="absolute left-[2px] top-[2px] w-[135px] h-[167px] bg-white border border-[#bbb] px-[12px] pt-[10px]">
        <div className="text-[14px] leading-[18px] text-[#444] whitespace-nowrap -ml-px">钢筋显示控制面板</div>
        <div className="mt-[20px] w-[110px] h-[106px] border border-[#ccc] rounded-[3px] pl-[9px] pt-[6px]">
          <CheckRow label="面筋" />
          <CheckRow label="底筋" />
          <CheckRow label="显示其它图元" />
          <CheckRow label="显示详细公式" />
        </div>
      </div>
      <CanvasTools />
      <CollapseTab side="left" />
      <CollapseTab side="right" />
    </div>
  )
}

function Box({ k }) {
  if (k === "on")
    return (
      <div className="w-[14px] h-[14px] rounded-[2px] bg-[#2f80e8] flex items-center justify-center">
        <svg width="10" height="9" viewBox="0 0 10 9" fill="none"><path d="m1 4.500 3 3 5-6" stroke="#fff" strokeWidth="1.800" /></svg>
      </div>
    )
  if (k === "part")
    return (
      <div className="w-[14px] h-[14px] rounded-[2px] border border-[#777] flex items-center justify-center">
        <div className="w-[10px] h-[10px] rounded-[1px] bg-[#7ab4f5] border border-[#5b9bf0]" />
      </div>
    )
  return <div className={`w-[14px] h-[14px] rounded-[2px] border ${k === "dis" ? "bg-[#eee] border-[#ccc]" : "bg-white border-[#8a8a8a]"}`} />
}

const tree = [
  ["所有构件", 0, "part"], ["施工段", 1, "part"], ["土方工程", 2], ["基础工程", 2], ["主体结构", 2], ["二次结构", 2], ["装饰装修", 2], ["外墙工程", 2], ["其它土建", 2], ["钢筋工程", 2, "on"],
  ["轴线", 1, "on", "dis"], ["轴网", 2, "on", "dis"], ["辅助轴线", 2, "on", "dis"],
  ["柱", 1], ["柱", 2], ["构造柱", 2], ["砌体柱", 2], ["约束边缘非阴...", 2],
  ["墙", 1], ["剪力墙", 2], ["人防门框墙", 2], ["砌体墙", 2], ["砌体加筋", 2], ["保温墙", 2], ["暗梁", 2], ["墙垛", 2], ["幕墙", 2],
  ["门窗洞", 1], ["门", 2], ["窗", 2], ["门联窗", 2], ["墙洞", 2], ["带形窗", 2], ["带形洞", 2],
]

function Expander() {
  return (
    <div className="w-[12px] h-[12px] shrink-0 rounded-[2px] border border-[#777] bg-white flex items-center justify-center">
      <div className="w-[6px] h-px bg-[#333]" />
    </div>
  )
}

function TreeRow({ name, level, show = "off", label = "off" }) {
  return (
    <div className="grid grid-cols-[132px_63px_63px] h-[21px] border-b border-[#e4e4e4] text-[12px] text-[#333]">
      <div className="flex items-center border-r border-[#e4e4e4] overflow-hidden whitespace-nowrap">
        {level === 0 && <div className="ml-[1px] mr-[7px] flex"><Expander /></div>}
        {level === 1 && <div className="ml-[11px] mr-[6px] flex"><Expander /></div>}
        {level === 2 && (
          <div className="ml-[17px] mr-[6px] w-[17px] self-stretch border-l border-[#e4e4e4] flex items-center">
            <div className="w-full h-px bg-[#e0e0e0]" />
          </div>
        )}
        <span className="leading-[16px]">{name}</span>
      </div>
      <div className="flex items-center justify-center border-r border-[#e4e4e4]"><Box k={show} /></div>
      <div className="flex items-center justify-center border-r border-[#e4e4e4]"><Box k={label} /></div>
    </div>
  )
}

function DisplayPanel() {
  return (
    <div className="ml-[4px] w-[279px] h-[821px] shrink-0 flex flex-col bg-white border-x border-b border-[#cfcfcf]">
      <PanelHead>
        <span className="ml-[9px] text-[12px] leading-[16px] text-[#333]">显示设置</span>
      </PanelHead>
      <div className="h-[26px] flex items-end pl-[3px] gap-[4px] border-b border-[#ddd]">
        <div className="w-[60px] h-[23px] -mb-px bg-white border border-[#ddd] border-b-white rounded-t-[3px] text-[12px] leading-[22px] text-center text-[#3d8be8]">图元显示</div>
        <div className="w-[60px] h-[22px] bg-[#ddd] rounded-t-[3px] text-[12px] leading-[22px] text-center text-[#555]">楼层显示</div>
      </div>
      <div className="mx-[3px] mt-[3px] h-[720px] overflow-hidden border border-[#e0e0e0] relative">
        <div className="grid grid-cols-[132px_63px_63px] h-[20px] border-b border-[#e4e4e4] text-[12px] text-[#333]">
          <div className="flex items-center justify-center border-r border-[#e4e4e4]">图层构件</div>
          <div className="flex items-center justify-center border-r border-[#e4e4e4]">显示图元</div>
          <div className="flex items-center justify-center border-r border-[#e4e4e4]">显示名称</div>
        </div>
        {tree.map(([name, level, show, label], i) => (
          <TreeRow key={i} name={name} level={level} show={show} label={label} />
        ))}
        <div className="absolute right-[4px] top-[12px] w-[5px] h-[158px] rounded-full bg-[#eee]" />
      </div>
      <div className="flex justify-end pr-[7px] mt-[9px]">
        <div className="w-[90px] h-[26px] border border-[#ccc] rounded-[4px] flex items-center justify-center text-[12px] text-[#333]">恢复默认设置</div>
      </div>
    </div>
  )
}

function StatBtn({ w, on, caret, children }) {
  return (
    <div style={{ width: w }} className={`h-[24px] shrink-0 rounded-[3px] border flex items-center justify-center gap-[4px] ${on ? "border-[#4a90e2] bg-[#dce9f9]" : "border-[#b5b5b5] bg-white"}`}>
      {children}
      {caret && <Caret c="#666" />}
    </div>
  )
}

function StatusBar() {
  return (
    <div className="h-[30px] shrink-0 flex items-center bg-white text-[12px] text-[#333] whitespace-nowrap">
      <span className="ml-[2px] w-[90px]">层高： 3</span>
      <span className="w-[140px]">标高： -3~0</span>
      <span className="w-[110px]">选中图元：12(12)</span>
      <span className="w-[109.5px]">隐藏图元：0</span>
      <StatBtn w={24} on>
        <svg width="14" height="14" viewBox="0 0 14 14" fill="none"><path d="M3 1v10h10M3 8h5v3" stroke="#4d5666" /></svg>
      </StatBtn>
      <div className="ml-[4px]"><StatBtn w={35} on caret><div className="w-[13px] h-[14px] rounded-[2px] border border-[#4d5666]" /></StatBtn></div>
      <div className="ml-[7px]"><StatBtn w={24}>
        <svg width="14" height="14" viewBox="0 0 14 14" fill="none"><path d="m1 1 12 12M13 1 1 13" stroke="#8a8a8a" /></svg>
      </StatBtn></div>
      <div className="ml-[7px]"><StatBtn w={35} on caret>
        <svg width="16" height="14" viewBox="0 0 16 14" fill="none"><path d="M1 12h14M1 12 11 2" stroke="#8a8a8a" /></svg>
      </StatBtn></div>
      <div className="ml-[4px]"><StatBtn w={35} caret>
        <svg width="16" height="14" viewBox="0 0 16 14" fill="none"><path d="M4 1v6M1 4h6" stroke="#4d5666" /><rect x="6" y="8" width="9" height="4" fill="#4d5666" /></svg>
      </StatBtn></div>
      <div className="ml-[4px]"><StatBtn w={24}>
        <svg width="14" height="16" viewBox="0 0 14 16" fill="none"><rect x="1" y="1" width="9" height="12" rx="1" fill="#4d5666" /><path d="m10 8 4 3-4 3z" fill="#4d5666" /></svg>
      </StatBtn></div>
      <div className="ml-[4px]"><StatBtn w={25}>
        <svg width="14" height="16" viewBox="0 0 14 16" fill="none"><path d="M2 15V7l8-5" stroke="#777" /><path d="m8 8 4 3-4 3z" fill="#4d5666" /></svg>
      </StatBtn></div>
      <svg width="16" height="16" viewBox="0 0 16 16" fill="none" className="ml-[16px]"><path d="M1 15 15 1M9 1h6v6M1 9v6h6" stroke="#333" /></svg>
      <div className="ml-auto flex items-center mr-[11px]">
        <div className="w-[14px] h-[14px] rounded-full bg-[#f08c2e] flex items-center justify-center text-[10px] leading-[14px] font-bold text-white">!</div>
        <span className="ml-[6px] leading-[16px]">合法性检查存在问题，请点击查看</span>
        <div className="ml-[13px] w-[15px] h-[15px] rounded-full bg-[#76b900] flex items-center justify-center">
          <svg width="9" height="8" viewBox="0 0 9 8" fill="none"><path d="m1 4 2.500 3L8 1" stroke="#fff" strokeWidth="1.500" /></svg>
        </div>
        <span className="ml-[5px] leading-[16px]">实时计算已完成</span>
      </div>
    </div>
  )
}

function TaskBtn({ children }) {
  return <div className="w-[60px] h-[38px] mr-[2px] rounded-[3px] border border-[#9fd0ee] bg-[#ffffff40] flex items-center justify-center">{children}</div>
}

function Tray({ children }) {
  return <div className="w-[23.4px] flex items-center justify-center">{children}</div>
}

function Taskbar() {
  return (
    <div className="h-[40px] shrink-0 flex items-center border-t border-[#2b4660] bg-[linear-gradient(90deg,#2a86c6_0%,#45a6da_50%,#3a97d0_72%,#1c5a9c_84%,#16447f_100%)] text-white">
      <div className="w-[56px] flex justify-center">
        <svg width="38" height="38" viewBox="0 0 38 38">
          <circle cx="19" cy="19" r="18" fill="#1d4e74" stroke="#9cc6dd" />
          <path d="M11 12c3-2 5-1 7 0l-1 6c-2-1-4-2-7 0z" fill="#e8542e" />
          <path d="M19 12c3 2 5 1 8 0l-2 6c-2 1-4 1-7 0z" fill="#7cc142" />
          <path d="M9.500 19c3-2 5-1 7 0l-1 6c-2-1-4-2-7 0z" fill="#3a9ad9" />
          <path d="M18 19c3 2 5 1 7 0l-1 6c-2 1-5 1-7 0z" fill="#f5c12e" />
        </svg>
      </div>
      <div className="w-[19px] flex justify-center">
        <div className="grid grid-cols-2 gap-[2px]">
          {Array.from({ length: 16 }).map((_, i) => <div key={i} className="w-[2px] h-[2px] bg-[#123c5c]" />)}
        </div>
      </div>
      <TaskBtn>
        <div className="w-[32px] h-[32px] rounded-[5px] bg-[#2a7cf0] flex items-center justify-center">
          <svg width="22" height="22" viewBox="0 0 22 22"><path d="M1 6 19 1v5l-7 2 1 13-5-4-1-7-6 2z" fill="#fff" /></svg>
        </div>
      </TaskBtn>
      <TaskBtn>
        <svg width="32" height="32" viewBox="0 0 32 32" fill="none">
          <circle cx="16" cy="16" r="12" fill="#fff" stroke="#7fc531" strokeWidth="4" />
          <path d="M9 16h14c0-5-3-8-7-8s-7 3-7 8 3 8 7 8c3 0 5-1 6-3" stroke="#6eb81f" strokeWidth="3.500" />
        </svg>
      </TaskBtn>
      <TaskBtn>
        <svg width="32" height="34" viewBox="0 0 32 34" fill="none">
          <path d="M26 5C16 1 6 8 6 18c0 9 7 13 13 12 6-1 9-7 6-11-2-3-7-3-8 0" stroke="#1b8fe8" strokeWidth="5" />
        </svg>
      </TaskBtn>
      <div className="ml-auto flex items-center">
        <div className="grid grid-cols-4 gap-[2px] mr-[1px]">
          {Array.from({ length: 24 }).map((_, i) => <div key={i} className="w-[2px] h-[2px] bg-[#123c66]" />)}
        </div>
        <Tray><svg width="16" height="14" viewBox="0 0 16 14"><rect y="3" width="16" height="10" rx="2" fill="#cfcfcf" /><path d="M2 6h12M2 8.500h12" stroke="#777" strokeDasharray="1 1" /></svg></Tray>
        <Tray><div className="w-[16px] h-[16px] rounded-full bg-[#14169c] border border-[#cdd] text-[11px] leading-[14px] text-center font-bold">?</div></Tray>
        <Tray>
          <div className="flex flex-col items-center gap-[4px]">
            <svg width="10" height="8" viewBox="0 0 10 8" fill="none"><path d="M3 2V1h6v4H7M1 3h6v4H1z" stroke="#fff" /></svg>
            <Caret c="#fff" />
          </div>
        </Tray>
        <Tray><div className="w-[15px] h-[15px] rounded-full bg-[#7fc531] border-2 border-white" /></Tray>
        <Tray><div className="w-[9px] h-[15px] rounded-[2px] bg-[#8a8a8a]" /></Tray>
        <Tray><svg width="16" height="15" viewBox="0 0 16 15"><path d="M1 5h3l5-4v13l-5-4H1z" fill="#d9593a" /><path d="M12 4c1 2 1 5 0 7" stroke="#5a1a12" fill="none" /></svg></Tray>
        <Tray><div className="w-[16px] h-[16px] rounded-full bg-[#e8c61e] flex items-center justify-center text-[13px] leading-[14px] font-bold text-[#1f6f1f]">+</div></Tray>
        <Tray><div className="w-[16px] h-[16px] rounded-[3px] bg-[#f5a623]" /></Tray>
        <Tray><div className="w-[16px] h-[16px] rounded-[2px] bg-white flex items-end"><div className="w-full h-[5px] bg-[#e8742e]" /></div></Tray>
        <Tray><svg width="16" height="16" viewBox="0 0 16 16" fill="none"><path d="M13 2C8 0 2 3 2 8c0 4 3 6 6 6s5-3 4-5c-1-2-4-1-4 0" stroke="#2aa3f0" strokeWidth="2.500" /></svg></Tray>
        <Tray><svg width="15" height="12" viewBox="0 0 15 12"><path d="M0 10h2v2H0zM3 8h2v4H3zM6 6h2v6H6zM9 3h2v9H9zM12 0h2v12h-2z" fill="#fff" /></svg></Tray>
        <Tray><Volume2 size={15} className="text-white" /></Tray>
        <div className="w-[70px] ml-[7px] text-center text-[12px] leading-[18px] text-white">
          <div>14:30</div>
          <div className="whitespace-nowrap">2024/7/30</div>
        </div>
        <div className="ml-[14px] w-[16px] h-[15px] bg-white flex items-center justify-center">
          <svg width="5" height="7" viewBox="0 0 5 7"><path d="M0 0v7l5-3.500z" fill="#111" /></svg>
        </div>
        <div className="ml-[12px] w-[14px] h-[39px] border border-[#4e7da8] bg-[#ffffff20]" />
      </div>
    </div>
  )
}

export default function App() {
  return (
    <div className="w-[1920px] h-[1080px] flex flex-col overflow-hidden bg-white font-['Noto_Sans','Noto_Sans_CJK_SC',sans-serif]">
      <TitleBar />
      <MenuBar />
      <Ribbon />
      <ComboBar />
      <div className="h-[822px] shrink-0 flex bg-[#f0f0f0]">
        <Nav />
        <div className="ml-[6px] w-[326px] shrink-0 flex flex-col">
          <ListPanel />
          <PropPanel />
        </div>
        <Canvas />
        <DisplayPanel />
      </div>
      <StatusBar />
      <Taskbar />
    </div>
  )
}
